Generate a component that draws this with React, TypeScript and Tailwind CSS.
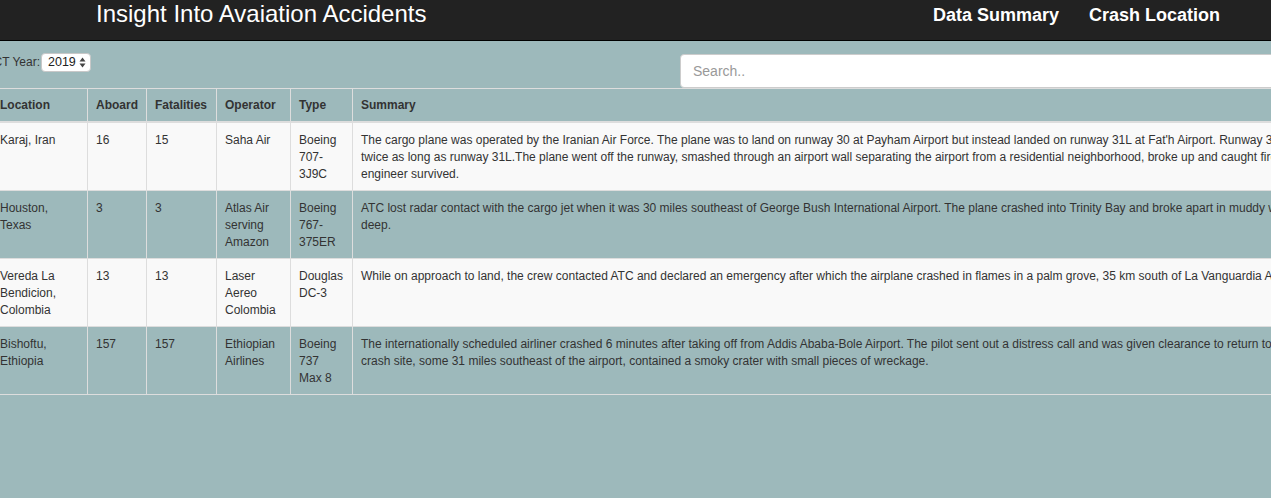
import React from "react";

const rows = [
  {
    loc: "Karaj, Iran",
    aboard: "16",
    fat: "15",
    op: "Saha Air",
    type: "Boeing 707-3J9C",
    summary: [
      "The cargo plane was operated by the Iranian Air Force. The plane was to land on runway 30 at Payham Airport but instead landed on runway 31L at Fat'h Airport. Runway 30 is",
      "twice as long as runway 31L.The plane went off the runway, smashed through an airport wall separating the airport from a residential neighborhood, broke up and caught fire. Only the flight",
      "engineer survived.",
    ],
    white: true,
  },
  {
    loc: "Houston, Texas",
    aboard: "3",
    fat: "3",
    op: "Atlas Air serving Amazon",
    type: "Boeing 767-375ER",
    summary: [
      "ATC lost radar contact with the cargo jet when it was 30 miles southeast of George Bush International Airport. The plane crashed into Trinity Bay and broke apart in muddy water a few feet",
      "deep.",
    ],
    white: false,
  },
  {
    loc: "Vereda La Bendicion, Colombia",
    aboard: "13",
    fat: "13",
    op: "Laser Aereo Colombia",
    type: "Douglas DC-3",
    summary: [
      "While on approach to land, the crew contacted ATC and declared an emergency after which the airplane crashed in flames in a palm grove, 35 km south of La Vanguardia Airport.",
    ],
    white: true,
  },
  {
    loc: "Bishoftu, Ethiopia",
    aboard: "157",
    fat: "157",
    op: "Ethiopian Airlines",
    type: "Boeing 737 Max 8",
    summary: [
      "The internationally scheduled airliner crashed 6 minutes after taking off from Addis Ababa-Bole Airport. The pilot sent out a distress call and was given clearance to return to the airport. The",
      "crash site, some 31 miles southeast of the airport, contained a smoky crater with small pieces of wreckage.",
    ],
    white: false,
  },
];

const th =
  "text-left align-top font-bold pt-[8px] pb-[7px] px-[8px] border-b-2 border-r border-[#dddddd] leading-[17px]";
const td =
  "text-left align-top pt-[9px] pb-[7px] px-[8px] border-b border-r border-[#dddddd] leading-[17px]";

export default function App() {
  return (
    <div
      className="w-[1271px] h-[498px] overflow-hidden bg-[#9db9bb] text-[#333333]"
      style={{ fontFamily: '"Liberation Sans", Arial, Helvetica, sans-serif' }}
    >
      <header className="h-[41px] bg-[#222222] border-b border-black flex items-start justify-between">
        <div className="ml-[96px] text-white text-[24px] leading-[28px] whitespace-nowrap">
          Insight Into Avaiation Accidents
        </div>
        <nav className="flex gap-[30px] pr-[51px] pt-[3px] text-white font-bold text-[18px] leading-[24px] whitespace-nowrap">
          <a>Data Summary</a>
          <a>Crash Location</a>
        </nav>
      </header>

      <div className="w-[1400px] -ml-[8px]">
        <div className="flex items-start justify-between pt-[12px]">
          <div className="flex items-center ml-[8px] h-[19px]">
            <div className="w-[40px] flex justify-end whitespace-nowrap text-[12px] leading-[19px]">
              <span>SELECT Year:</span>
            </div>
            <div className="ml-[1px] w-[50px] h-[19px] bg-white rounded-[4px] border border-[#c8c8c8] flex items-center justify-between pl-[6px] pr-[4px] text-[12.5px] text-[#222]">
              <span className="leading-[17px]">2019</span>
              <svg width="7" height="11" viewBox="0 0 7 11">
                <path d="M3.5 0.5 L6.5 4.5 L0.5 4.5 Z" fill="#444" />
                <path d="M3.5 10.5 L6.5 6.5 L0.5 6.5 Z" fill="#444" />
              </svg>
            </div>
          </div>
          <div className="mt-[1px] w-[712px] h-[34px] bg-white rounded-[4px] border border-[#cccccc] flex items-center px-[12px] text-[14px] text-[#999999]">
            Search..
          </div>
        </div>

        <table className="w-[1400px] table-fixed border-separate border-spacing-0 text-[12px] border-t border-[#dddddd]">
          <colgroup>
            <col className="w-[96px]" />
            <col className="w-[59px]" />
            <col className="w-[70px]" />
            <col className="w-[74px]" />
            <col className="w-[62px]" />
            <col />
          </colgroup>
          <thead>
            <tr>
              <th className={th}>Location</th>
              <th className={th}>Aboard</th>
              <th className={th}>Fatalities</th>
              <th className={th}>Operator</th>
              <th className={th}>Type</th>
              <th className={th}>Summary</th>
            </tr>
          </thead>
          <tbody>
            {rows.map((r, i) => (
              <tr key={i} className={r.white ? "bg-[#f9f9f9]" : ""}>
                <td className={td}>{r.loc}</td>
                <td className={td}>{r.aboard}</td>
                <td className={td}>{r.fat}</td>
                <td className={td}>{r.op}</td>
                <td className={td}>{r.type}</td>
                <td className={td + " whitespace-nowrap h-[68px]"}>
                  {r.summary.map((l, j) => (
                    <React.Fragment key={j}>
                      {l}
                      {j < r.summary.length - 1 && <br />}
                    </React.Fragment>
                  ))}
                </td>
              </tr>
            ))}
          </tbody>
        </table>
      </div>
    </div>
  );
}
